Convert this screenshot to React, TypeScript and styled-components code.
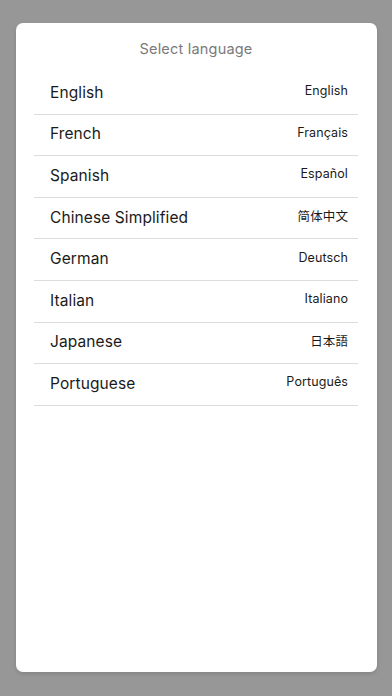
import React from "react";
import styled, { createGlobalStyle } from "styled-components";

const Global = createGlobalStyle`
  html, body { margin: 0; padding: 0; background: #979797; }
  body { font-family: Inter, "Noto Sans CJK SC", sans-serif; }
  * { box-sizing: border-box; }
`;

const Screen = styled.div`
  width: 392px;
  height: 696px;
  background: #979797;
  padding: 23px 15px 24px 16px;
  display: flex;
`;

const Card = styled.div`
  flex: 1;
  background: #ffffff;
  border-radius: 7px;
  box-shadow: 0 2px 4px rgba(0, 0, 0, 0.12);
  padding: 16px 19px 0 18px;
  display: flex;
  flex-direction: column;
`;

const Title = styled.div`
  text-align: center;
  font-size: 14.5px;
  color: #7a7a7a;
  height: 20px;
  line-height: 20px;
  letter-spacing: 0.2px;
  margin-bottom: 14px;
`;

const List = styled.div`
  display: flex;
  flex-direction: column;
`;

const Row = styled.div`
  display: flex;
  align-items: center;
  justify-content: space-between;
  height: 41.6px;
  padding: 0 10px 2px 16px;
  border-bottom: 1px solid #dcdcdc;
`;

const Name = styled.span`
  font-size: 15.5px;
  color: #1a1a1a;
  letter-spacing: 0.1px;
`;

const Native = styled.span`
  font-size: 12.5px;
  color: #1a1a1a;
  letter-spacing: 0.1px;
  margin-top: -3px;
`;

const languages: [string, string][] = [
  ["English", "English"],
  ["French", "Français"],
  ["Spanish", "Español"],
  ["Chinese Simplified", "简体中文"],
  ["German", "Deutsch"],
  ["Italian", "Italiano"],
  ["Japanese", "日本語"],
  ["Portuguese", "Português"],
];

export default function App() {
  return (
    <>
      <Global />
      <Screen>
        <Card>
          <Title>Select language</Title>
          <List>
            {languages.map(([name, native]) => (
              <Row key={name}>
                <Name>{name}</Name>
                <Native lang={name === "Japanese" ? "ja" : undefined}>{native}</Native>
              </Row>
            ))}
          </List>
        </Card>
      </Screen>
    </>
  );
}
